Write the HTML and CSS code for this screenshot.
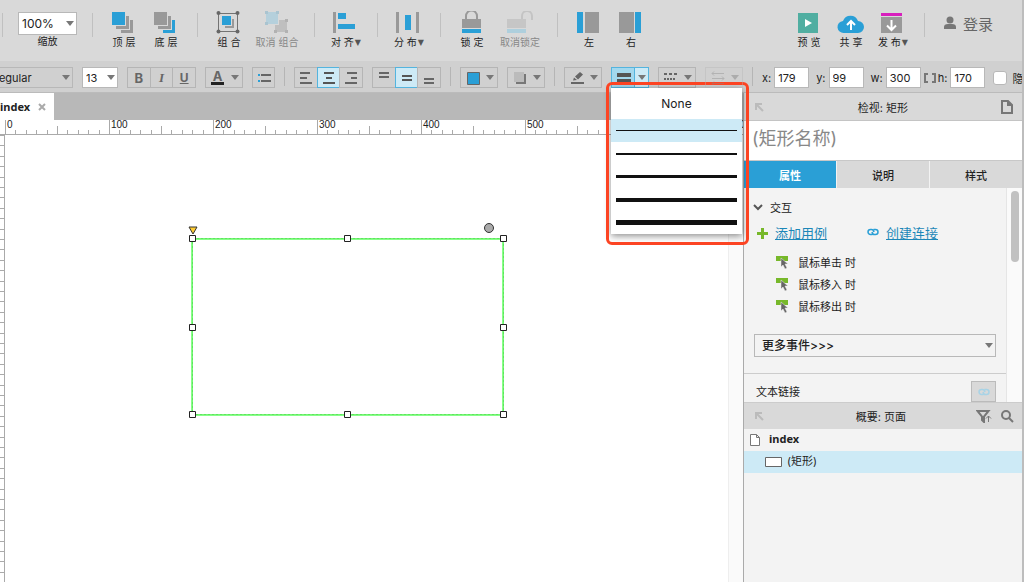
FILE: index.html
```html
<!DOCTYPE html>
<html lang="zh-CN">
<head>
<meta charset="utf-8">
<title>index</title>
<link rel="stylesheet" href="styles.css">
</head>
<body>
<div class="app">
  <header class="toolbar">
    <span class="sep"></span>
    <div class="zoom">
      <span class="select select-zoom"><select id="zoom"><option>100%</option></select><i class="caret"></i></span>
      <label for="zoom">缩放</label>
    </div>
    <span class="sep"></span>
    <button class="tool"><svg width="28" height="24"><path fill="#2a9fd6" d="M2 1h13v13H2z"/><path fill="#999" d="M16 5h3v13H6v-3h10zM20 9h3v13H11v-3h9z"/></svg>顶 层</button>
    <button class="tool"><svg width="28" height="24"><path fill="#999" d="M2 1h13v13H2zM16 5h3v13H6v-3h10z"/><path fill="#2a9fd6" d="M20 9h3v13H11v-3h9z"/></svg>底 层</button>
    <span class="sep"></span>
    <button class="tool"><svg width="28" height="24"><path fill="none" stroke="#737373" d="M3.500 2.500h19v18h-19z"/><g fill="#666"><circle cx="3.500" cy="2" r="2"/><circle cx="22.500" cy="2" r="2"/><circle cx="3.500" cy="20.500" r="2"/><circle cx="22.500" cy="20.500" r="2"/></g><path fill="#2a9fd6" d="M7 5h9v9H7z"/><path fill="#999" d="M17 8h2v9h-9v-2h7z"/></svg>组 合</button>
    <button class="tool tool-wide off"><svg width="28" height="24"><path fill="#b5d0dc" d="M3 1h12v12H3z"/><path fill="#bfbfbf" d="M16 9h8v12H12v-7h4z"/><path fill="#aac4d0" d="M2 0h3v3H2zM13 0h3v3h-3zM2 11h3v3H2z"/><path fill="#b2b2b2" d="M22 8h3v3h-3zM11 19h3v3h-3zM22 19h3v3h-3z"/></svg>取消 组合</button>
    <span class="sep"></span>
    <button class="tool"><svg width="28" height="24"><path fill="#999" d="M1 1h3v21H1z"/><path fill="#2a9fd6" d="M6 2h8v6H6zM6 13h17v5H6z"/></svg><span>对 齐<small>▼</small></span></button>
    <span class="sep"></span>
    <button class="tool"><svg width="28" height="24"><path fill="#999" d="M1 1h3v21H1zM21 1h3v21h-3z"/><path fill="#2a9fd6" d="M10 4h6v15h-6z"/></svg><span>分 布<small>▼</small></span></button>
    <span class="sep"></span>
    <button class="tool"><svg width="28" height="24"><path fill="none" stroke="#999" stroke-width="2" d="M8 9V5a5 5 0 0 1 11 0v4"/><path fill="#999" d="M4 8h19v9H4z"/><path fill="#2a9fd6" d="M4 18h19v4H4z"/></svg>锁 定</button>
    <button class="tool tool-wide off"><svg width="28" height="24"><path fill="none" stroke="#c4c4c4" stroke-width="2" d="M16 9V5a5 5 0 0 1 10 0v4"/><path fill="#c6c6c6" d="M1 8h19v9H1z"/><path fill="#aecfdd" d="M1 18h19v4H1z"/></svg>取消锁定</button>
    <span class="sep"></span>
    <button class="tool"><svg width="28" height="24"><path fill="#2a9fd6" d="M2 1h6v21H2z"/><path fill="#999" d="M10 1h14v21H10z"/></svg>左</button>
    <button class="tool"><svg width="28" height="24"><path fill="#999" d="M2 1h15v21H2z"/><path fill="#2a9fd6" d="M18 1h6v21h-6z"/></svg>右</button>
    <div class="account">
      <button class="tool"><svg width="28" height="24"><path fill="#50aea1" d="M3 2h20v20H3z"/><path fill="#fff" d="M10 8l7 4-7 4z"/></svg>预 览</button>
      <button class="tool"><svg width="28" height="24"><path fill="#2a9fd6" d="M7 22a6 6 0 0 1-1-12 8 8 0 0 1 15 0 6 6 0 0 1 0 12z"/><path fill="none" stroke="#fff" stroke-width="2" d="M14 19v-9M10 14l4-4 4 4"/></svg>共 享</button>
      <button class="tool"><svg width="28" height="24"><path fill="#d81fbd" d="M2 2h21v3H2z"/><path fill="#999" d="M2 6h21v16H2z"/><path fill="none" stroke="#fff" stroke-width="2" d="M12.500 9v10M8 14.500l4.500 4.500 4.500-4.500"/></svg><span>发 布<small>▼</small></span></button>
      <span class="sep"></span>
      <button class="login"><svg width="14" height="14"><circle cx="7" cy="4" r="3.500" fill="#777"/><path fill="#777" d="M1 13v-2q0-3 4-3h4q4 0 4 3v2z"/></svg>登录</button>
    </div>
  </header>

  <div class="format">
    <span class="select select-font"><select aria-label="字形"><option>Regular</option></select><i class="caret"></i></span>
    <span class="select select-size"><select aria-label="字号"><option>13</option></select><i class="caret"></i></span>
    <div class="group trio"><button class="b">B</button><button class="i">I</button><button class="u">U</button></div>
    <div class="group split"><button class="color" aria-label="文字颜色">A</button><button aria-label="更多颜色"><i class="caret"></i></button></div>
    <div class="group"><button aria-label="项目符号"><svg width="16" height="14"><path fill="#2a9fd6" d="M2 3h2v2H2zM2 9h2v2H2z"/><path fill="#666" d="M5 3h10v2H5zM5 9h10v2H5z"/></svg></button></div>
    <span class="rule"></span>
    <div class="group trio">
      <button aria-label="左对齐"><svg width="16" height="14"><path fill="#666" d="M2 1h10v2H2zM2 6h7v2H2zM2 11h12v2H2z"/></svg></button>
      <button class="on" aria-label="居中"><svg width="16" height="14"><path fill="#555" d="M3 1h10v2H3zM5 6h6v2H5zM2 11h12v2H2z"/></svg></button>
      <button aria-label="右对齐"><svg width="16" height="14"><path fill="#666" d="M4 1h10v2H4zM8 6h6v2H8zM2 11h12v2H2z"/></svg></button>
    </div>
    <div class="group trio">
      <button aria-label="顶部对齐"><svg width="16" height="14"><path fill="#666" d="M3 1h10v2H3zM3 5h10v2H3z"/></svg></button>
      <button class="on" aria-label="垂直居中"><svg width="16" height="14"><path fill="#555" d="M3 4h10v2H3zM3 8h10v2H3z"/></svg></button>
      <button aria-label="底部对齐"><svg width="16" height="14"><path fill="#666" d="M3 7h10v2H3zM3 11h10v2H3z"/></svg></button>
    </div>
    <span class="rule"></span>
    <div class="group split"><button aria-label="填充"><svg width="16" height="14"><path fill="#2a9fd6" stroke="#666" d="M2.500 1.500h12v12h-12z"/></svg></button><button aria-label="更多填充"><i class="caret"></i></button></div>
    <div class="group split"><button aria-label="阴影"><svg width="16" height="14"><path fill="#777" d="M4 3h10v10H4z"/><path fill="#bbb" d="M2 1h10v10H2z"/></svg></button><button aria-label="更多阴影"><i class="caret"></i></button></div>
    <span class="rule"></span>
    <div class="group split"><button aria-label="线条颜色"><svg width="16" height="14"><path fill="#666" d="M2 11h13v2H2z"/><path fill="#666" d="M4 9.500l1-3 3 2.500zM6 5.500l5-4.500 3 2.500-5 5z"/></svg></button><button aria-label="更多线条颜色"><i class="caret"></i></button></div>
    <div class="width-picker">
      <div class="group split active"><button aria-label="线宽"><svg width="16" height="14"><path fill="#555" d="M1 2h14v4H1zM1 8h14v4H1z"/></svg></button><button aria-label="选择线宽" aria-expanded="true"><i class="caret"></i></button></div>
      <div class="menu">
        <button class="none">None</button>
        <button class="line-1 picked" aria-label="1"></button>
        <button class="line-2" aria-label="2"></button>
        <button class="line-3" aria-label="3"></button>
        <button class="line-4" aria-label="4"></button>
        <button class="line-5" aria-label="5"></button>
      </div>
      <div class="callout"></div>
    </div>
    <div class="group split"><button aria-label="线型"><svg width="16" height="14"><path fill="#666" d="M1 2h3v2H1zM6 2h3v2H6zM11 2h3v2h-3zM1 7h2v2H1zM4 7h2v2H4zM7 7h2v2H7zM10 7h2v2h-2z"/></svg></button><button aria-label="更多线型"><i class="caret"></i></button></div>
    <div class="group split faded"><button disabled aria-label="箭头"><svg width="16" height="14"><path fill="none" stroke="#888" d="M2 2.500h12M4 .500l-2 2 2 2M2 7.500h12M12 5.500l2 2-2 2M2 12.500h12M4 10.500l-2 2 2 2"/></svg></button><button disabled aria-label="更多箭头"><i class="caret"></i></button></div>
    <span class="rule"></span>
    <div class="dims">
      <label for="x">x:</label><input id="x" value="179">
      <label for="y">y:</label><input id="y" value="99">
      <label for="w">w:</label><input id="w" value="300">
      <svg class="lock" width="14" height="12"><path fill="none" stroke="#777" stroke-width="2" d="M5 2H2v8h3M9 2h3v8H9"/></svg>
      <label for="h">h:</label><input id="h" value="170">
      <input type="checkbox" id="hide"><label for="hide">隐</label>
    </div>
  </div>

  <main class="main">
    <section class="workspace">
      <div class="tabs"><div class="tab">index<button aria-label="关闭"><svg width="8" height="8"><path stroke="#aaa" stroke-width="2" d="M1 1l6 6M7 1L1 7"/></svg></button></div></div>
      <div class="ruler">
        <svg class="ticks" width="100%" height="14"><defs><pattern id="px" width="104" height="14" patternUnits="userSpaceOnUse"><path stroke="#aaa" d="M.500 0v14M10.500 10v4M21.500 10v4M31.500 10v4M42.500 10v4M52.500 6v8M62.500 10v4M73.500 10v4M83.500 10v4M94.500 10v4"/></pattern></defs><rect width="100%" height="14" fill="url(#px)"/></svg>
        <div class="marks"><span>0</span><span>100</span><span>200</span><span>300</span><span>400</span><span>500</span><span>600</span><span>700</span></div>
      </div>
      <div class="stage">
        <svg class="side" width="5" height="100%"><defs><pattern id="py" width="5" height="104" patternUnits="userSpaceOnUse"><path stroke="#aaa" d="M0 .500h4M0 10.500h4M0 21.500h4M0 31.500h4M0 42.500h4M0 52.500h4M0 62.500h4M0 73.500h4M0 83.500h4M0 94.500h4M4.500 0v104"/></pattern></defs><rect width="5" height="100%" fill="url(#py)"/></svg>
        <div class="canvas">
          <svg width="540" height="320">
            <path fill="none" stroke="#8f8" stroke-width="2" d="M187 104h311v176H187z"/>
            <path fill="none" stroke="#5ee65e" stroke-dasharray="3 1" d="M187.500 103.500h311v176h-311z"/>
            <g fill="#fff" stroke="#222"><path d="M184.500 100.500h6v6h-6zM339.500 100.500h6v6h-6zM495.500 100.500h6v6h-6zM184.500 189.500h6v6h-6zM495.500 189.500h6v6h-6zM184.500 276.500h6v6h-6zM339.500 276.500h6v6h-6zM495.500 276.500h6v6h-6z"/></g>
            <path fill="#fc3" stroke="#333" d="M184 92h8l-4 7z"/>
            <circle cx="484" cy="93" r="4.500" fill="#aaa" stroke="#333"/>
          </svg>
        </div>
        <div class="track"></div>
      </div>
    </section>

    <aside class="panel">
      <div class="head"><svg width="14" height="14"><path fill="none" stroke="#bbb" stroke-width="2" d="M10 4H4v6M4 4l7 7"/></svg><h2>检视: 矩形</h2><button aria-label="页面"><svg width="14" height="16"><path fill="none" stroke="#777" stroke-width="2" d="M2 2h6l4 4v8H2zM8 2v4h4"/></svg></button></div>
      <input class="name" aria-label="名称" placeholder="(矩形名称)">
      <nav class="sections"><button class="current">属性</button><button>说明</button><button>样式</button></nav>
      <div class="props">
        <div class="body">
          <button class="fold"><svg width="10" height="8"><path fill="none" stroke="#555" stroke-width="2" d="M1 2l4 4 4-4"/></svg>交互</button>
          <div class="links">
            <a href="#add"><svg width="12" height="14"><path fill="#77b82a" d="M5 3h3v4h4v3H8v4H5v-4H1V7h4z"/></svg><span>添加用例</span></a>
            <a href="#link"><svg width="12" height="12"><use href="#chain" stroke="#2a9fd6"/></svg><span>创建连接</span></a>
          </div>
          <ul class="events">
            <li><svg width="14" height="14"><use href="#ev"/></svg>鼠标单击 时</li>
            <li><svg width="14" height="14"><use href="#ev"/></svg>鼠标移入 时</li>
            <li><svg width="14" height="14"><use href="#ev"/></svg>鼠标移出 时</li>
          </ul>
          <span class="select select-more"><select aria-label="更多事件"><option>更多事件&gt;&gt;&gt;</option></select><i class="caret"></i></span>
          <div class="text-link"><span>文本链接</span><button aria-label="链接"><svg width="12" height="12"><use href="#chain" stroke="#a8d3e6"/></svg></button></div>
        </div>
        <div class="scroll"><i></i></div>
      </div>
      <div class="head head-2"><svg width="14" height="14"><path fill="none" stroke="#bbb" stroke-width="2" d="M10 4H4v6M4 4l7 7"/></svg><h2>概要: 页面</h2><button aria-label="筛选"><svg width="16" height="14"><path fill="none" stroke="#777" stroke-width="2" d="M1.500 2h11L8 7.500V13L6 11V7.500z"/><path fill="none" stroke="#777" d="M12.500 13V7M10 9.500L12.500 7 15 9.500"/></svg></button><button aria-label="搜索"><svg width="14" height="14"><circle cx="6" cy="6" r="4" fill="none" stroke="#777" stroke-width="2"/><path stroke="#777" stroke-width="2" d="M9 9l4 4"/></svg></button></div>
      <ul class="tree">
        <li class="page"><svg width="12" height="14"><path fill="#fff" stroke="#777" d="M1.500 1.500h6l3 3v8h-9zM7.500 1.500v3h3"/></svg><span>index</span></li>
        <li class="shape"><svg width="17" height="10"><path fill="#fff" stroke="#666" d="M.500 .500h16v9H.500z"/></svg><span>(矩形)</span></li>
      </ul>
    </aside>
  </main>
</div>
<svg width="0" height="0" class="defs"><defs>
  <g id="ev"><path fill="#77b82a" d="M1 1h12v5H1z"/><path fill="#666" stroke="#f3f3f3" stroke-width=".5" d="M6 3v9l2-2 2 4 2-1-2-4h3z"/></g>
  <path id="chain" fill="none" stroke-width="1.500" d="M5.500 8.500h-2a2.500 2.500 0 0 1 0-5h1q2 0 2.500 2.500M6.500 3.500h2a2.500 2.500 0 0 1 0 5h-1q-2 0-2.500-2.500"/>
</defs></svg>
</body>
</html>
```
FILE: styles.css
```css
* { box-sizing: border-box; }
body, ul, h2 { margin: 0; padding: 0; }
body, button, input, select { font-family: Inter, "Noto Sans CJK SC", sans-serif; color: #222; }
button { border: 0; padding: 0; background: none; }
ul { list-style: none; }
svg { display: block; flex: none; }
.defs { position: absolute; }

.app { display: flex; flex-direction: column; height: 100vh; overflow: hidden; border-right: 2px solid #bdbdbd; background: #d9d9d9; }
.caret { width: 0; height: 0; border: 4px solid transparent; border-top: 5px solid #777; border-bottom: 0; }

.toolbar { display: flex; flex: none; height: 61px; padding-left: 2px; }
.sep { flex: none; width: 1px; height: 24px; margin: 13px 10px 0; background: #c0c0c0; }
.toolbar > .sep:first-child { margin-left: 0; }
.zoom { display: flex; flex-direction: column; align-items: center; width: 69px; padding-top: 12px; font-size: 10px; line-height: 13px; }
.tool { display: flex; flex: none; flex-direction: column; align-items: center; width: 42px; padding-top: 11px; font-size: 10px; line-height: 14px; white-space: nowrap; }
.tool-wide { width: 54px; }
.tool small { margin-left: 1px; font: 8px/8px "DejaVu Sans", sans-serif; vertical-align: 1px; color: #555; }
.off { color: #888; }
.account { display: flex; margin-left: auto; padding-right: 29px; }
.login { display: flex; gap: 6px; align-items: center; height: 24px; margin-top: 11px; padding-left: 8px; font-size: 15px; color: #666; }

.select { display: grid; flex: none; align-items: center; }
.select > * { grid-area: 1 / 1; }
.select select { width: 100%; height: 100%; border: 1px solid #b8b8b8; border-radius: 0; padding: 0 0 0 3px; appearance: none; background: #fff; font-size: 12px; }
.select .caret { justify-self: end; margin-right: 3px; pointer-events: none; }
.select-zoom { width: 59px; height: 23px; }

.format { position: relative; z-index: 2; display: flex; flex: none; gap: 9px; height: 32px; padding-top: 6px; border-bottom: 1px solid #bbb; background: #d0d0d0; }
.format .select, .group { height: 21px; }
.select-font { width: 93px; margin-left: -20px; }
.format .select-font select { padding-left: 11px; background: transparent; font-size: 11px; }
.select-size { width: 36px; }
.format .select-size select { font-size: 11px; }
.group { display: flex; flex: none; border: 1px solid #b5b5b5; }
.group button { display: grid; place-items: center; width: 23px; margin: -1px 0 -1px -1px; border: 1px solid #b5b5b5; font-size: 13px; font-weight: 700; color: #666; }
.group button:last-child { margin-right: -1px; }
.trio { width: 69px; }
.trio button { flex: 1; }
.group .i { font-family: "Liberation Serif", serif; font-style: italic; }
.group .u { font-size: 12px; text-decoration: underline; }
.group .on { border-color: #54b4de; background: #cdeaf6; }
.split { width: 38px; }
.split button { flex: none; width: 24px; border-right: 0; }
.split button:last-child { width: 15px; border-left: 0; border-right: 1px solid #b5b5b5; }
.color { line-height: 12px; }
.color::after { content: ""; width: 13px; height: 3px; background: #222; }
.split .color { align-content: center; }
.active button { border-color: #54b4de; background: #a3d8ee; }
.active button:last-child { border: 1px solid #54b4de; background: #cdeaf6; }
.faded { opacity: .4; }
.rule { flex: none; width: 1px; height: 19px; background: #b5b5b5; }

.width-picker { position: relative; }
.menu { position: absolute; top: 21px; left: 0; display: flex; flex-direction: column; width: 131px; background: #fff; box-shadow: 0 2px 7px rgba(0, 0, 0, .45); }
.menu button { height: 23px; padding: 0 5px; }
.menu .none { height: 31px; font-size: 12px; }
.menu button::after { content: ""; display: block; background: #111; }
.menu .picked { background: #cdeaf6; }
.line-1::after { height: 1px; }
.line-2::after { height: 2px; }
.line-3::after { height: 3px; }
.line-4::after { height: 4px; }
.line-5::after { height: 5px; }
.callout { position: absolute; top: 15px; left: -5px; width: 143px; height: 163px; border: 3px solid #fc4423; border-radius: 6px; pointer-events: none; }

.dims { display: flex; align-items: center; height: 21px; font-size: 11px; white-space: nowrap; }
.dims input { width: 35px; height: 21px; margin: 0 7px 0 3px; border: 1px solid #b8b8b8; padding: 0 3px; background: #fff; font-size: 11px; }
.dims #w { margin-right: 2px; }
.dims .lock { margin-right: 1px; }
.dims #hide { width: 14px; height: 14px; margin: 0 5px 0 1px; border-radius: 3px; appearance: none; }

.main { display: flex; flex: 1; min-height: 0; }
.workspace { display: flex; flex: 1; flex-direction: column; min-width: 0; background: #fff; }
.tabs { display: flex; flex: none; height: 27px; background: #b8b8b8; }
.tab { display: flex; gap: 8px; align-items: center; width: 54px; background: #fff; font: 700 11px "Noto Sans", sans-serif; }
.ruler { display: grid; flex: none; height: 15px; padding-left: 5px; overflow: hidden; border-bottom: 1px solid #aaa; }
.ruler > * { grid-area: 1 / 1; min-width: 0; }
.marks { display: flex; font: 10px/10px "Liberation Sans", sans-serif; }
.marks span { flex: none; width: 104px; padding-left: 2px; }
.stage { display: flex; flex: 1; min-height: 0; }
.canvas { flex: 1; min-width: 0; overflow: hidden; }
.track { width: 15px; border-left: 1px solid #eee; background: #fafafa; }

.panel { display: flex; flex: none; flex-direction: column; width: 279px; border-left: 1px solid #aaa; background: #f3f3f3; }
.head { display: flex; flex: none; gap: 8px; align-items: center; height: 28px; padding: 0 8px; border-bottom: 1px solid #c4c4c4; background: #d9d9d9; }
.head h2 { flex: 1; font-size: 11px; font-weight: 400; text-align: center; }
.name { flex: none; width: 100%; height: 39px; border: 0; padding: 0 8px 4px; background: #fff; font-size: 18px; }
.name::placeholder { color: #888; }
.sections { display: flex; flex: none; gap: 1px; height: 28px; border-top: 1px solid #c8c8c8; background: #f3f3f3; }
.sections button { flex: 1; background: #d9d9d9; font-size: 11px; font-weight: 500; }
.sections .current { background: #2a9fd6; font-weight: 700; color: #fff; }
.props { display: flex; flex: none; height: 214px; overflow: hidden; }
.body { flex: 1; }
.fold { display: flex; gap: 7px; align-items: center; height: 20px; margin: 9px 0 0 9px; font-size: 11px; }
.links { display: flex; gap: 40px; height: 30px; padding-left: 12px; }
.links a { display: flex; gap: 7px; align-items: center; font-size: 13px; color: #1c87b8; }
.links a:hover { color: #0f5f85; }
.events { padding: 4px 0 0 31px; }
.events li { display: flex; gap: 9px; align-items: center; height: 22px; font-size: 11px; }
.select-more { height: 23px; margin: 17px 10px 0; }
.select-more select { padding-left: 7px; background: #f3f3f3; font-weight: 500; }
.text-link { display: flex; justify-content: space-between; margin-top: 16px; padding: 7px 10px 0 12px; border-top: 1px solid #ccc; font-size: 11px; line-height: 22px; }
.text-link button { display: grid; place-items: center; width: 25px; height: 21px; border: 1px solid #bbb; background: #d9d9d9; }
.scroll { display: flex; justify-content: center; width: 16px; padding-top: 3px; border-left: 1px solid #e5e5e5; background: #fafafa; }
.scroll i { width: 8px; height: 71px; border-radius: 4px; background: #c1c1c1; }
.head-2 { height: 27px; border-top: 1px solid #ccc; border-bottom: 0; }
.head-2 h2 { padding-left: 20px; }
.tree li { display: flex; align-items: center; height: 22px; font-size: 11px; }
.tree span { padding-bottom: 4px; }
.tree .page { gap: 8px; padding-left: 5px; font: 700 11px "Noto Sans", sans-serif; }
.tree .shape { gap: 5px; padding-left: 21px; background: #cdeaf6; }
```
